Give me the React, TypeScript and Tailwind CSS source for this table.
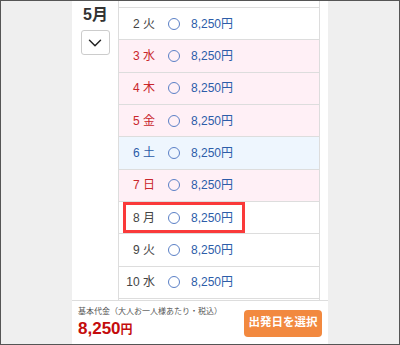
import { ChevronDown } from "lucide-react";

type Day = {
  d: number;
  w: string;
  kind: "normal" | "holiday" | "sat";
  picked?: boolean;
};

const days: Day[] = [
  { d: 2, w: "火", kind: "normal" },
  { d: 3, w: "水", kind: "holiday" },
  { d: 4, w: "木", kind: "holiday" },
  { d: 5, w: "金", kind: "holiday" },
  { d: 6, w: "土", kind: "sat" },
  { d: 7, w: "日", kind: "holiday" },
  { d: 8, w: "月", kind: "normal", picked: true },
  { d: 9, w: "火", kind: "normal" },
  { d: 10, w: "水", kind: "normal" },
];

const rowBg = {
  normal: "bg-white",
  holiday: "bg-[#fff0f6]",
  sat: "bg-[#eef6fe]",
};

const dayColor = {
  normal: "text-[#444444]",
  holiday: "text-[#c9262c]",
  sat: "text-[#2b5ca8]",
};

function DayRow({ day }: { day: Day }) {
  return (
    <div
      className={`relative flex items-center h-[32.33px] shrink-0 border-t border-[#dddddd] ${rowBg[day.kind]}`}
    >
      <div className={`w-[36px] text-right text-[12px] ${dayColor[day.kind]}`}>
        {day.d} {day.w}
      </div>
      <div className="ml-[13px] w-[12px] h-[12px] rounded-full border-[1.5px] border-[#5b80c6]" />
      <div className="ml-[11px] text-[12px] text-[#2d5da9]">8,250円</div>

      {day.picked && (
        <div className="absolute left-[4px] top-0 bottom-0 w-[122px] border-[3px] border-[#fa3a3a]" />
      )}
    </div>
  );
}

export default function App() {
  return (
    <div
      className="w-[400px] h-[345px] border border-[#555555] bg-[#efefef] flex overflow-hidden"
      style={{ fontFamily: '"Liberation Sans", "Noto Sans CJK JP", sans-serif' }}
    >
      <div className="w-[71px] shrink-0" />

      <div className="w-[256px] shrink-0 bg-white flex flex-col">
        <div className="flex flex-1 min-h-0">
          <div className="w-[46px] shrink-0 flex flex-col items-center">
            <div className="mt-[4px] text-[16px] font-bold text-[#333333] leading-[20px] ml-[1px]">
              5月
            </div>
            <button className="mt-[5px] w-[29px] h-[25px] border border-[#cccccc] rounded-[3px] flex items-center justify-center">
              <ChevronDown size={22} strokeWidth={1.6} color="#222222" />
            </button>
          </div>

          <div className="w-[202px] shrink-0 border-x border-[#dddddd] flex flex-col overflow-hidden">
            <div className="h-[6px] shrink-0 bg-white" />
            {days.map((day) => (
              <DayRow key={day.d} day={day} />
            ))}
            <div className="h-[10px] shrink-0 border-t border-[#dddddd]" />
          </div>
        </div>

        <div className="h-[44px] shrink-0 border-t border-[#dddddd] flex items-center justify-between pl-[6px] pr-[6px]">
          <div className="flex flex-col">
            <div className="text-[8px] text-[#555555] leading-[10px]">
              基本代金（大人お一人様あたり・税込）
            </div>
            <div className="mt-[3px] text-[17px] font-bold text-[#c40c0c] leading-[18px]">
              8,250<span className="text-[12px]">円</span>
            </div>
          </div>
          <button className="w-[78px] h-[27px] mt-[1px] rounded-[4px] bg-[#f2893f] text-white text-[11.5px] font-bold whitespace-nowrap">
            出発日を選択
          </button>
        </div>
      </div>
    </div>
  );
}
